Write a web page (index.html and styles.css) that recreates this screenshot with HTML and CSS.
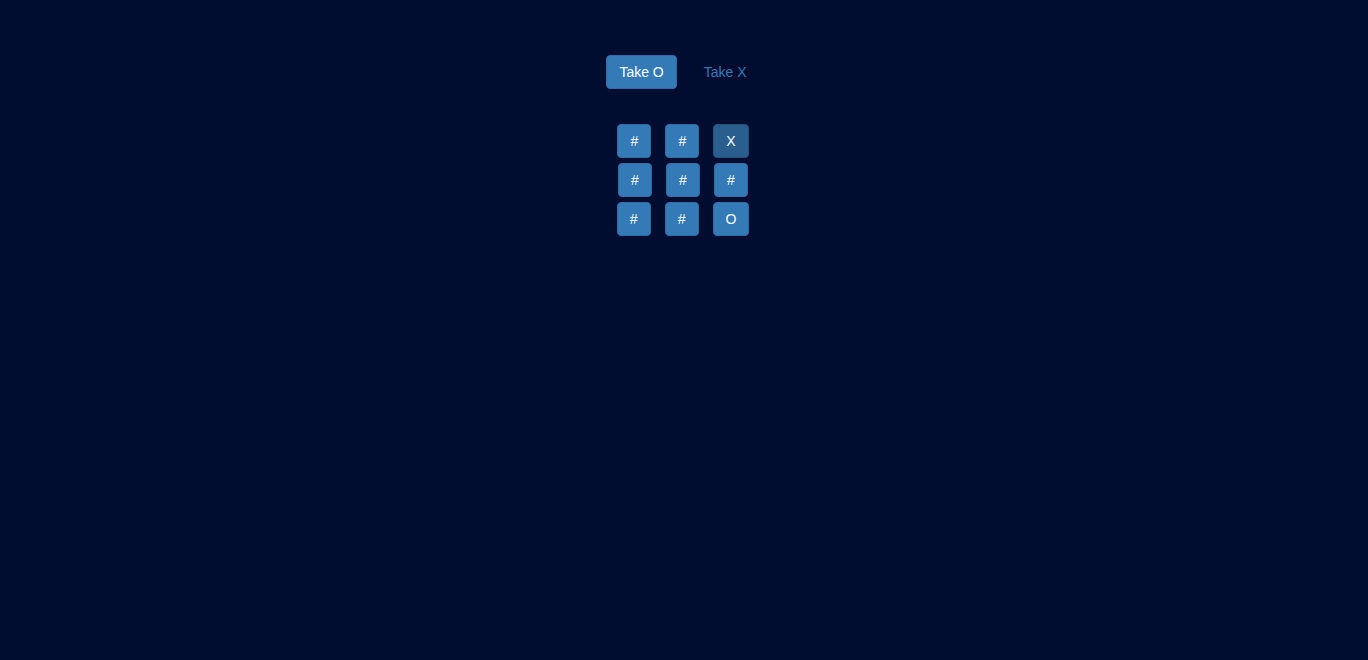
FILE: index.html
```html
<!DOCTYPE html>
<html>
<head>
<meta charset="utf-8">
<link rel="stylesheet" href="styles.css">
</head>
<body>
<div class="app">
  <div class="choice">
    <button class="btn btn-primary">Take O</button>
    <button class="btn btn-link">Take X</button>
  </div>
  <div class="board">
    <div class="row">
      <button class="btn btn-primary cell">#</button>
      <button class="btn btn-primary cell">#</button>
      <button class="btn btn-primary cell taken">X</button>
    </div>
    <div class="row">
      <button class="btn btn-primary cell">#</button>
      <button class="btn btn-primary cell">#</button>
      <button class="btn btn-primary cell">#</button>
    </div>
    <div class="row">
      <button class="btn btn-primary cell">#</button>
      <button class="btn btn-primary cell">#</button>
      <button class="btn btn-primary cell">O</button>
    </div>
  </div>
</div>
</body>
</html>
```
FILE: styles.css
```css
html, body {
  margin: 0;
  padding: 0;
  height: 100%;
  background: #000d30;
}
body {
  font-family: "Liberation Sans", Arial, sans-serif;
  font-size: 14px;
  line-height: 1.42857143;
  color: #fff;
}
.app {
  display: flex;
  flex-direction: column;
  align-items: center;
  padding-top: 55px;
  padding-right: 2px;
}
.choice {
  display: flex;
  gap: 14px;
}
.btn {
  display: inline-block;
  box-sizing: border-box;
  height: 34px;
  padding: 6px 12px;
  font-family: inherit;
  font-size: 14px;
  line-height: 20px;
  border: 1px solid transparent;
  border-radius: 4px;
  cursor: pointer;
  white-space: nowrap;
}
.btn-primary {
  background: #337ab7;
  border-color: #2e6da4;
  color: #fff;
}
.btn-link {
  background: transparent;
  color: #337ab7;
}
.board {
  margin-top: 35px;
  display: flex;
  flex-direction: column;
  gap: 5px;
}
.row {
  display: flex;
  justify-content: center;
  gap: 14px;
}
.cell {
  min-width: 34px;
}
.cell.taken {
  background: #2a5e8e;
  border-color: #224f78;
}
```
